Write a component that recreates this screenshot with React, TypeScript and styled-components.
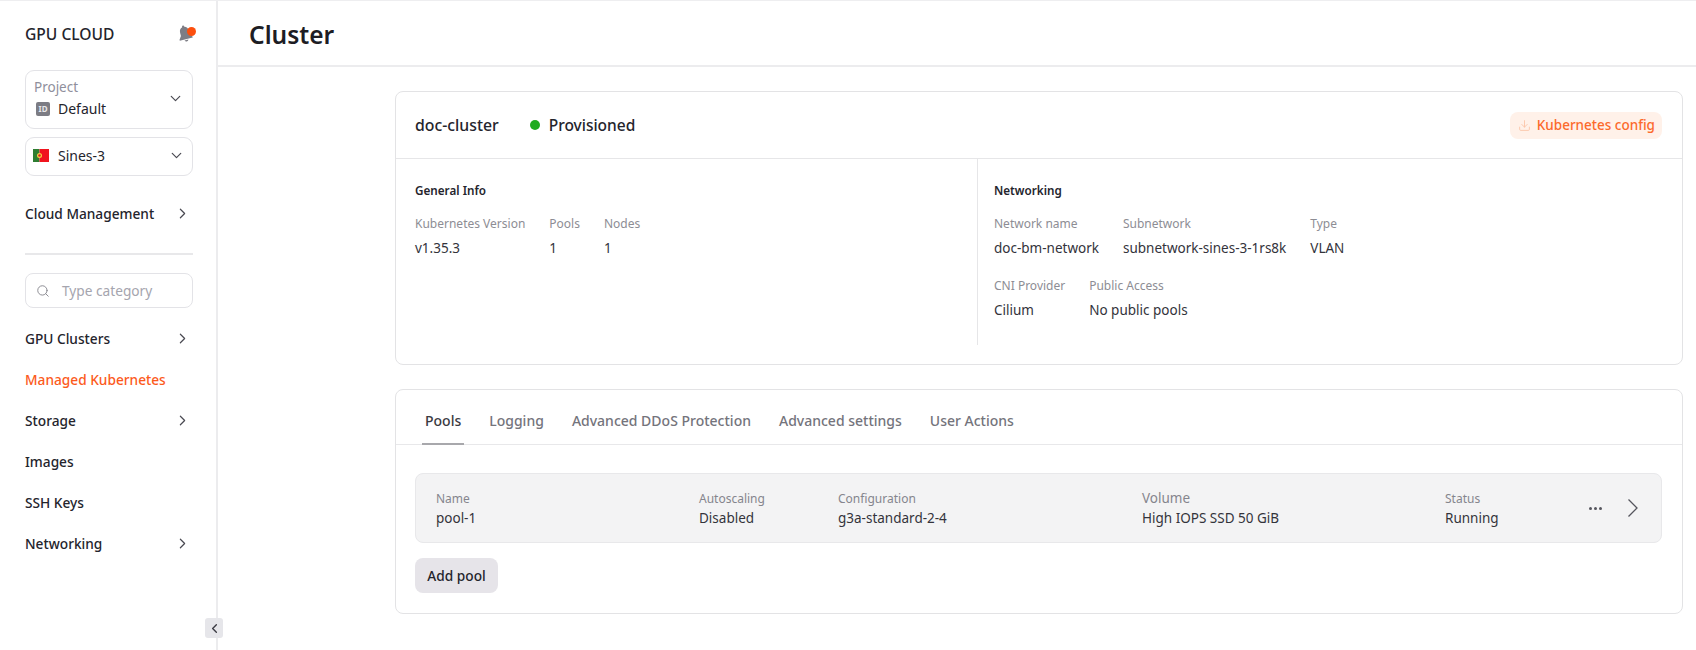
import React from "react";
import styled, { createGlobalStyle } from "styled-components";
import { ChevronDown, ChevronLeft, ChevronRight, Download, Search } from "lucide-react";

const GlobalStyle = createGlobalStyle`
  html, body {
    margin: 0;
    padding: 0;
    background: #fff;
    font-family: "Noto Sans", "Open Sans", sans-serif;
    color: #24242c;
  }
  * { box-sizing: border-box; }
`;

const navItems = [
  { label: "GPU Clusters", arrow: true },
  { label: "Managed Kubernetes", active: true },
  { label: "Storage", arrow: true },
  { label: "Images" },
  { label: "SSH Keys" },
  { label: "Networking", arrow: true },
];

const generalInfo = [
  { label: "Kubernetes Version", value: "v1.35.3" },
  { label: "Pools", value: "1" },
  { label: "Nodes", value: "1" },
];

const networkRows = [
  [
    { label: "Network name", value: "doc-bm-network" },
    { label: "Subnetwork", value: "subnetwork-sines-3-1rs8k" },
    { label: "Type", value: "VLAN" },
  ],
  [
    { label: "CNI Provider", value: "Cilium" },
    { label: "Public Access", value: "No public pools" },
  ],
];

const tabs = ["Pools", "Logging", "Advanced DDoS Protection", "Advanced settings", "User Actions"];

const poolCells = [
  { label: "Name", value: "pool-1" },
  { label: "Autoscaling", value: "Disabled" },
  { label: "Configuration", value: "g3a-standard-2-4" },
  { label: "Volume", value: "High IOPS SSD 50 GiB", large: true },
  { label: "Status", value: "Running" },
];

const App = () => {
  return (
    <Page>
      <GlobalStyle />
      <Sidebar>
        <Brand>
          <BrandName>GPU CLOUD</BrandName>
          <BellWrap>
            <svg width="18" height="20" viewBox="0 0 16 18">
              <g transform="rotate(-14 8 9)" fill="#7d7d85">
                <path d="M8 1.200c-.6 0-1 .4-1 1v.4C5 3.100 4 4.700 4 6.800v3.100L2 12.800v.9h12v-.9l-2-2.900V6.800c0-2.100-1-3.700-3-4.200v-.4c0-.6-.4-1-1-1z" />
                <path d="M6.200 14.600a1.900 1.900 0 0 0 3.600 0z" />
              </g>
            </svg>
            <BellDot />
          </BellWrap>
        </Brand>

        <ProjectBox>
          <ProjectText>
            <ProjectLabel>Project</ProjectLabel>
            <ProjectValue>
              <IdBadge>ID</IdBadge>
              Default
            </ProjectValue>
          </ProjectText>
          <ChevronDown size={17} strokeWidth={1.7} color="#4a4a52" />
        </ProjectBox>

        <RegionBox>
          <RegionValue>
            <svg width="16" height="13" viewBox="0 0 16 13">
              <rect width="6.500" height="13" fill="#2e7d32" />
              <rect x="6.500" width="9.500" height="13" fill="#f0141e" />
              <circle cx="6.500" cy="6.500" r="2.500" fill="#f5d33f" />
              <circle cx="6.500" cy="6.500" r="1.300" fill="#d8202a" />
            </svg>
            Sines-3
          </RegionValue>
          <ChevronDown size={17} strokeWidth={1.7} color="#4a4a52" />
        </RegionBox>

        <NavItem $top>
          Cloud Management
          <ChevronRight size={17} strokeWidth={1.7} color="#4a4a52" />
        </NavItem>

        <SideDivider />

        <SearchBox>
          <Search size={14} strokeWidth={1.6} color="#85858d" />
          <span>Type category</span>
        </SearchBox>

        <NavList>
          {navItems.map((item) => (
            <NavItem key={item.label} $active={item.active}>
              {item.label}
              {item.arrow && <ChevronRight size={17} strokeWidth={1.7} color="#4a4a52" />}
            </NavItem>
          ))}
        </NavList>

        <CollapseButton>
          <ChevronLeft size={15} strokeWidth={2.2} color="#3c3c44" />
        </CollapseButton>
      </Sidebar>

      <Main>
        <Header>
          <Title>Cluster</Title>
        </Header>
        <Content>
          <Card>
            <CardHeader>
              <ClusterName>doc-cluster</ClusterName>
              <StatusDot />
              <StatusText>Provisioned</StatusText>
              <ConfigButton>
                <Download size={13} strokeWidth={1.6} color="#fcc4a6" />
                Kubernetes config
              </ConfigButton>
            </CardHeader>
            <InfoGrid>
              <InfoColumn>
                <SectionTitle>General Info</SectionTitle>
                <FieldRow>
                  {generalInfo.map((f) => (
                    <Field key={f.label}>
                      <FieldLabel>{f.label}</FieldLabel>
                      <FieldValue>{f.value}</FieldValue>
                    </Field>
                  ))}
                </FieldRow>
              </InfoColumn>
              <InfoColumn $divided>
                <SectionTitle>Networking</SectionTitle>
                {networkRows.map((row, i) => (
                  <FieldRow key={i}>
                    {row.map((f) => (
                      <Field key={f.label}>
                        <FieldLabel>{f.label}</FieldLabel>
                        <FieldValue>{f.value}</FieldValue>
                      </Field>
                    ))}
                  </FieldRow>
                ))}
              </InfoColumn>
            </InfoGrid>
          </Card>

          <Card>
            <TabBar>
              {tabs.map((tab, i) => (
                <Tab key={tab} $active={i === 0}>
                  {tab}
                </Tab>
              ))}
            </TabBar>
            <TabBody>
              <PoolRow>
                {poolCells.map((c) => (
                  <PoolCell key={c.label}>
                    <PoolLabel $large={c.large}>{c.label}</PoolLabel>
                    <PoolValue>{c.value}</PoolValue>
                  </PoolCell>
                ))}
                <PoolActions>
                  <Dots>
                    <i />
                    <i />
                    <i />
                  </Dots>
                  <svg width="12" height="20" viewBox="0 0 12 20" fill="none">
                    <path d="M1.500 1.500 10 10l-8.500 8.500" stroke="#55555d" strokeWidth="1.300" />
                  </svg>
                </PoolActions>
              </PoolRow>
              <AddButton>Add pool</AddButton>
            </TabBody>
          </Card>
        </Content>
      </Main>
    </Page>
  );
};

const Page = styled.div`
  display: flex;
  width: 1696px;
  height: 650px;
  border-top: 1px solid #eeeef0;
  overflow: hidden;
`;

const Sidebar = styled.aside`
  position: relative;
  flex: 0 0 218px;
  padding: 0 23px 0 25px;
  border-right: 2px solid #ececee;
  display: flex;
  flex-direction: column;
`;

const Brand = styled.div`
  height: 69px;
  padding-bottom: 4px;
  display: flex;
  align-items: center;
  justify-content: space-between;
`;

const BrandName = styled.div`
  font-size: 15.600px;
  font-weight: 500;
`;

const BellWrap = styled.div`
  position: relative;
  width: 20px;
  height: 20px;
  margin-right: -3px;
`;

const BellDot = styled.span`
  position: absolute;
  top: 3px;
  right: 0;
  width: 9px;
  height: 9px;
  border-radius: 50%;
  background: #fc4f0e;
`;

const ProjectBox = styled.div`
  height: 59px;
  border: 1.500px solid #e3e3e7;
  border-radius: 9px;
  padding: 0 8px 3px 8px;
  display: flex;
  align-items: center;
  justify-content: space-between;
`;

const ProjectText = styled.div`
  display: flex;
  flex-direction: column;
  gap: 4px;
`;

const ProjectLabel = styled.div`
  font-size: 13.500px;
  line-height: 17px;
  color: #8f8f9c;
`;

const ProjectValue = styled.div`
  display: flex;
  align-items: center;
  gap: 8px;
  font-size: 14px;
  line-height: 18px;
`;

const IdBadge = styled.span`
  width: 14px;
  height: 14px;
  margin-left: 2px;
  border-radius: 2px;
  background: #7c7c84;
  color: #e8e8ea;
  font-size: 8px;
  font-weight: 700;
  line-height: 14px;
  text-align: center;
`;

const RegionBox = styled.div`
  height: 39px;
  margin-top: 8px;
  border: 1.500px solid #e3e3e7;
  border-radius: 9px;
  padding: 0 7px 2px 7px;
  display: flex;
  align-items: center;
  justify-content: space-between;
`;

const RegionValue = styled.div`
  display: flex;
  align-items: center;
  gap: 9px;
  font-size: 14px;
`;

const NavItem = styled.div<{ $active?: boolean; $top?: boolean }>`
  height: 41px;
  margin-top: ${(p) => (p.$top ? "17px" : "0")};
  padding-right: 2px;
  display: flex;
  align-items: center;
  justify-content: space-between;
  font-size: 13.700px;
  font-weight: 500;
  color: ${(p) => (p.$active ? "#fc5a1c" : "#24242c")};
`;

const SideDivider = styled.div`
  height: 2px;
  margin-top: 19px;
  background: #e8e8ea;
`;

const SearchBox = styled.div`
  height: 35px;
  margin-top: 18px;
  padding-left: 10px;
  border: 1.500px solid #e3e3e7;
  border-radius: 8px;
  display: flex;
  align-items: center;
  gap: 12px;
  font-size: 13.700px;
  color: #a5a5ae;
`;

const NavList = styled.nav`
  margin-top: 10px;
`;

const CollapseButton = styled.button`
  position: absolute;
  left: 205px;
  top: 617px;
  width: 18px;
  height: 20px;
  padding: 0;
  border: 0;
  border-radius: 3px;
  background: #e6e6ea;
  display: flex;
  align-items: center;
  justify-content: center;
`;

const Main = styled.main`
  flex: 1;
  min-width: 0;
`;

const Header = styled.header`
  height: 66px;
  padding: 3px 31px 0;
  border-bottom: 2px solid #ececee;
  display: flex;
  align-items: center;
`;

const Title = styled.h1`
  margin: 0;
  font-size: 24.500px;
  font-weight: 600;
  color: #1d1d24;
`;

const Content = styled.div`
  padding: 24px 13px 0 177px;
  display: flex;
  flex-direction: column;
  gap: 24px;
`;

const Card = styled.section`
  border: 1.500px solid #e3e3e5;
  border-radius: 8px;
`;

const CardHeader = styled.div`
  height: 67px;
  padding: 0 20px 0 19px;
  border-bottom: 1.500px solid #e6e6e8;
  display: flex;
  align-items: center;
`;

const ClusterName = styled.div`
  font-size: 15.800px;
  font-weight: 500;
  color: #24242c;
`;

const StatusDot = styled.span`
  width: 10px;
  height: 10px;
  margin: 0 9px 0 31px;
  border-radius: 50%;
  background: #1eab1e;
`;

const StatusText = styled.div`
  font-size: 15.500px;
  font-weight: 500;
`;

const ConfigButton = styled.button`
  margin-left: auto;
  height: 27px;
  padding: 0 7px 0 8px;
  border: 0;
  border-radius: 8px;
  background: #fff1e9;
  display: flex;
  align-items: center;
  gap: 6px;
  font-family: inherit;
  font-size: 13.500px;
  font-weight: 500;
  color: #fc6a2c;
`;

const InfoGrid = styled.div`
  height: 205px;
  display: grid;
  grid-template-columns: 581px 1fr;
`;

const InfoColumn = styled.div<{ $divided?: boolean }>`
  padding: 23px 0 0 ${(p) => (p.$divided ? "16px" : "19px")};
  ${(p) => p.$divided && "border-left: 1.500px solid #e6e6e8; margin-bottom: 19px;"}
`;

const SectionTitle = styled.div`
  font-size: 11.700px;
  line-height: 17px;
  font-weight: 600;
  margin-bottom: 17px;
`;

const FieldRow = styled.div`
  display: flex;
  gap: 24px;
  margin-bottom: 21px;
`;

const Field = styled.div`
  display: flex;
  flex-direction: column;
  gap: 7px;
`;

const FieldLabel = styled.div`
  font-size: 12px;
  line-height: 16px;
  color: #8d8d94;
`;

const FieldValue = styled.div`
  font-size: 13.500px;
  line-height: 18px;
  color: #33333b;
`;

const TabBar = styled.div`
  height: 55px;
  padding: 0 26px;
  border-bottom: 1.500px solid #e8e8ea;
  display: flex;
  gap: 22px;
`;

const Tab = styled.div<{ $active?: boolean }>`
  height: 55px;
  padding: 22px 3px 0;
  border-bottom: 2px solid ${(p) => (p.$active ? "#a8a8ac" : "transparent")};
  font-size: 14px;
  line-height: 18px;
  font-weight: 500;
  color: ${(p) => (p.$active ? "#3a3a42" : "#74747c")};
`;

const TabBody = styled.div`
  padding: 28px 20px 20px 19px;
`;

const PoolRow = styled.div`
  position: relative;
  height: 70px;
  padding-left: 20px;
  border: 1px solid #e8e8ea;
  border-radius: 8px;
  background: #f3f3f4;
  display: grid;
  grid-template-columns: 263px 139px 304px 303px 1fr;
  align-items: center;
`;

const PoolCell = styled.div`
  display: flex;
  flex-direction: column;
  gap: 2px;
`;

const PoolLabel = styled.div<{ $large?: boolean }>`
  font-size: ${(p) => (p.$large ? "13.500px" : "12px")};
  line-height: 17px;
  color: #85858d;
`;

const PoolValue = styled.div`
  font-size: 13.500px;
  line-height: 18px;
  color: #33333b;
`;

const PoolActions = styled.div`
  position: absolute;
  right: 22px;
  top: 24px;
  display: flex;
  align-items: center;
  gap: 25px;
`;

const Dots = styled.span`
  display: flex;
  gap: 2px;
  i {
    width: 3px;
    height: 3px;
    border-radius: 50%;
    background: #55555d;
  }
`;

const AddButton = styled.button`
  display: block;
  margin-top: 15px;
  width: 83px;
  height: 35px;
  padding: 0;
  border: 0;
  border-radius: 8px;
  background: #e6e4e9;
  font-family: inherit;
  font-size: 13.700px;
  font-weight: 500;
  color: #24242c;
`;

export default App;
